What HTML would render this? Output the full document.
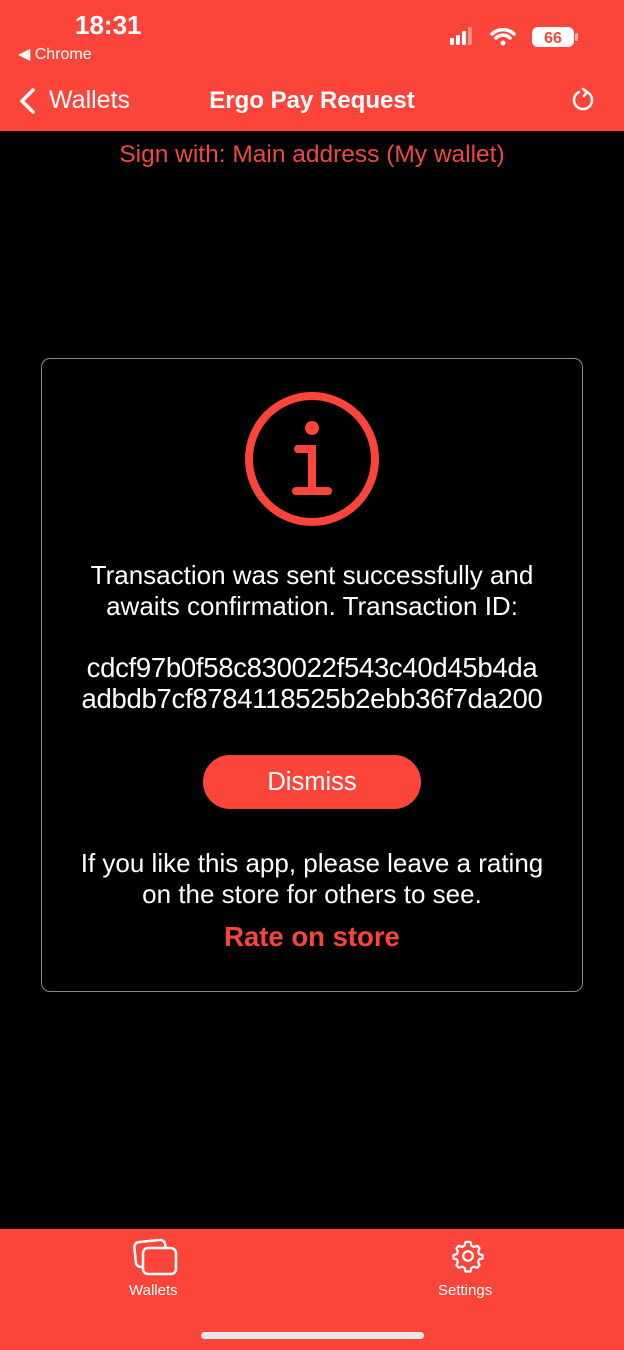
<!DOCTYPE html>
<html><head><meta charset="utf-8"><style>
*{margin:0;padding:0;box-sizing:border-box}
body{width:624px;height:1350px;background:#000;font-family:"Liberation Sans",sans-serif;position:relative;overflow:hidden;color:#fff}
.a{position:absolute}
.top{left:0;top:0;width:624px;height:131px;background:#fb453a}
.c{text-align:center;width:100%;left:0}
.card{left:41px;top:358px;width:542px;height:634px;border:1.5px solid #8a8a8a;border-radius:9px}
.t{font-size:26px;line-height:31px;white-space:nowrap}
.tab{left:0;top:1229px;width:624px;height:121px;background:#fb453a}
</style></head><body>
<div class="a top">
 <div class="a" style="left:75px;top:10px;font-size:26px;font-weight:bold">18:31</div>
 <div class="a" style="left:18px;top:44px;font-size:16px">◀ Chrome</div>
 <svg class="a" style="left:448px;top:26px" width="135" height="22">
  <rect x="2" y="12" width="4" height="7" rx="1" fill="#fff"/><rect x="8" y="9" width="4" height="10" rx="1" fill="#fff"/><rect x="14" y="5" width="4" height="14" rx="1" fill="#fff"/><rect x="20" y="1" width="4" height="18" rx="1" fill="#fff" opacity=".4"/>
  <path d="M44 8a16 16 0 0 1 22 0M48 12a10 10 0 0 1 14 0" stroke="#fff" stroke-width="3.5" fill="none" stroke-linecap="round"/><circle cx="55" cy="17" r="2.5" fill="#fff"/>
  <rect x="84" y="1" width="42" height="20" rx="6" fill="#fff"/><rect x="127" y="7" width="3" height="8" rx="1" fill="#fff" opacity=".6"/>
  <text x="105" y="17" font-size="16" font-weight="bold" fill="#fb453a" text-anchor="middle" font-family="Liberation Sans">66</text>
 </svg>
 <svg class="a" style="left:18px;top:87px" width="20" height="28"><path d="M15 3L4 14l11 11" stroke="#fff" stroke-width="3.5" fill="none" stroke-linecap="round" stroke-linejoin="round"/></svg>
 <div class="a" style="left:49px;top:86px;font-size:25px">Wallets</div>
 <div class="a c" style="top:87px;font-size:24px;font-weight:bold">Ergo Pay Request</div>
 <svg class="a" style="left:570px;top:86px" width="26" height="26"><path d="M17 6a9 9 0 1 1-8 0" stroke="#fff" stroke-width="2.5" fill="none" stroke-linecap="round"/><path d="M13 3l4 3-3 4" stroke="#fff" stroke-width="2.5" fill="none" stroke-linecap="round"/></svg>
</div>
<div class="a c" style="top:141px;font-size:24.5px;color:#ec4a40">Sign with: Main address (My wallet)</div>
<div class="a card"></div>
<svg class="a" style="left:244px;top:391px" width="136" height="136"><circle cx="68" cy="68" r="63" stroke="#fb453a" stroke-width="8" fill="none"/><circle cx="68" cy="37" r="7" fill="#fb453a"/><path d="M54 58h14v42M52 100h32" stroke="#fb453a" stroke-width="8" fill="none" stroke-linecap="round"/></svg>
<div class="a c t" style="top:560px">Transaction was sent successfully and<br>awaits confirmation. Transaction ID:</div>
<div class="a c t" style="top:652px;font-size:27.5px;letter-spacing:-0.3px">cdcf97b0f58c830022f543c40d45b4da<br>adbdb7cf8784118525b2ebb36f7da200</div>
<div class="a" style="left:203px;top:755px;width:218px;height:54px;border-radius:27px;background:#fb453a;font-size:25.5px;text-align:center;line-height:54px">Dismiss</div>
<div class="a c t" style="top:848px">If you like this app, please leave a rating<br>on the store for others to see.</div>
<div class="a c" style="top:921px;font-size:27.5px;font-weight:bold;color:#fb453a">Rate on store</div>
<div class="a tab">
 <svg class="a" style="left:132px;top:8px" width="48" height="40"><rect x="3" y="4" width="31" height="25" rx="5" stroke="#fff" stroke-width="2.5" fill="none" transform="rotate(-6 18 16)"/><rect x="11" y="11" width="33" height="26" rx="5" stroke="#fff" stroke-width="2.5" fill="#fb453a"/></svg>
 <div class="a" style="left:129px;top:53px;font-size:15px">Wallets</div>
 <svg class="a" style="left:449px;top:8px" width="38" height="38" viewBox="0 0 24 24"><path d="M12 3l1.6.2.5 2.2 1.6.9 2.1-.8 1.5 1.6-.9 2.1.6 1.6 2.2.6v2.2l-2.2.6-.6 1.6.9 2.1-1.5 1.6-2.1-.8-1.6.9-.5 2.2h-3.2l-.5-2.2-1.6-.9-2.1.8-1.5-1.6.9-2.1-.6-1.6-2.2-.6v-2.2l2.2-.6.6-1.6-.9-2.1 1.5-1.6 2.1.8 1.6-.9.5-2.2z" stroke="#fff" stroke-width="1.4" fill="none" stroke-linejoin="round"/><circle cx="12" cy="12" r="3" stroke="#fff" stroke-width="1.4" fill="none"/></svg>
 <div class="a" style="left:438px;top:53px;font-size:15px">Settings</div>
 <div class="a" style="left:201px;top:103px;width:223px;height:7px;border-radius:4px;background:#e6e6e6"></div>
</div>
</body></html>
